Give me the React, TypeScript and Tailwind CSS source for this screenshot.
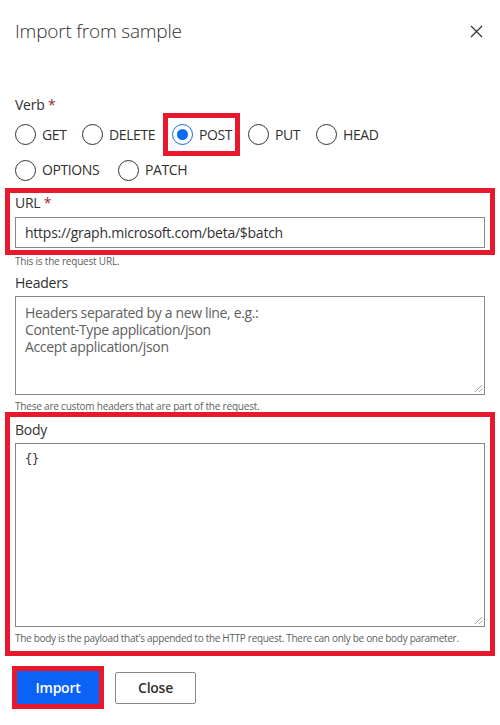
import React from "react";

const RED = "border-[#e8192c]";

function Radio({ label, checked }: { label: string; checked?: boolean }) {
  return (
    <div className="flex items-center">
      <span
        className={`flex h-[21px] w-[21px] items-center justify-center rounded-full border ${
          checked ? "border-[#0b6bf2]" : "border-[#323130]"
        } bg-white`}
      >
        {checked && <span className="h-[11px] w-[11px] rounded-full bg-[#0b6bf2]" />}
      </span>
      <span className="ml-[6px] text-[14px] leading-[20px] tracking-[-0.4px] text-[#323130]">{label}</span>
    </div>
  );
}

function Grip() {
  return (
    <svg className="absolute bottom-[1px] right-[1px]" width="10" height="10" viewBox="0 0 10 10">
      <path d="M9 2 L2 9 M9 6 L6 9" stroke="#a19f9d" strokeWidth="1" fill="none" />
    </svg>
  );
}

export default function App() {
  return (
    <div
      className="relative h-[725px] w-[500px] overflow-hidden bg-white tracking-[-0.25px] text-[#323130]"
      style={{ fontFamily: '"Open Sans", "Noto Sans", sans-serif' }}
    >
      {/* header */}
      <div className="flex items-start justify-between pl-[15px] pr-[17px] pt-[17px]">
        <h1 className="text-[19px] font-light leading-[28px] tracking-[-0.2px] text-[#323130]">
          Import from sample
        </h1>
        <svg className="mt-[8px]" width="13" height="13" viewBox="0 0 13 13">
          <path d="M1 1 L12 12 M12 1 L1 12" stroke="#323130" strokeWidth="1.2" fill="none" />
        </svg>
      </div>

      {/* verb */}
      <div className="mt-[50px] px-[15px] text-[14px] leading-[20px]">
        Verb <span className="text-[#a4262c]">*</span>
      </div>
      <div className="mt-[-2px] flex h-[43px] items-center pl-[15px]">
        <div className="w-[67px]">
          <Radio label="GET" />
        </div>
        <div className="w-[81px]">
          <Radio label="DELETE" />
        </div>
        <div className={`flex h-[43px] w-[77px] items-center border-[5px] ${RED} pl-[4px]`}>
          <Radio label="POST" checked />
        </div>
        <div className="ml-[8px] w-[68px]">
          <Radio label="PUT" />
        </div>
        <div>
          <Radio label="HEAD" />
        </div>
      </div>
      <div className="flex h-[28px] items-center pl-[15px]">
        <div className="w-[103px]">
          <Radio label="OPTIONS" />
        </div>
        <Radio label="PATCH" />
      </div>

      {/* URL */}
      <div className={`mx-[5px] mt-[4px] border-[5px] ${RED} px-[5px] pb-[2px]`}>
        <div className="text-[14px] leading-[20px]">
          URL <span className="text-[#a4262c]">*</span>
        </div>
        <div className="mt-[4px] flex h-[31px] items-center border border-[#8a8886] px-[9px] text-[14px] text-[#323130]">
          https://graph.microsoft.com/beta/$batch
        </div>
      </div>
      <div className="px-[15px] text-[10px] leading-[13px] tracking-[-0.2px] text-[#605e5c]">This is the request URL.</div>

      {/* headers */}
      <div className="mt-[5px] px-[15px] text-[14px] leading-[20px]">Headers</div>
      <div className="mx-[15px] mt-[3px]">
        <div className="relative h-[99px] border border-[#8a8886] px-[9px] pt-[7px] text-[14px] leading-[17px] tracking-[-0.35px] text-[#605e5c]">
          <div>Headers separated by a new line, e.g.:</div>
          <div>Content-Type application/json</div>
          <div>Accept application/json</div>
          <Grip />
        </div>
      </div>
      <div className="mt-[5px] px-[15px] text-[10px] leading-[13px] tracking-[-0.2px] text-[#605e5c]">
        These are custom headers that are part of the request.
      </div>

      {/* body */}
      <div className={`mx-[5px] mt-[-1px] border-[5px] ${RED} px-[5px] pb-[6px]`}>
        <div className="pt-[3px] text-[14px] leading-[20px]">Body</div>
        <div
          className="relative mt-[3px] h-[184px] border border-[#8a8886] px-[9px] pt-[7px] text-[12px] leading-[16px] text-[#323130]"
          style={{ fontFamily: '"DejaVu Sans Mono", monospace' }}
        >
          {"{}"}
          <Grip />
        </div>
        <div className="mt-[5px] whitespace-nowrap text-[10px] leading-[13px] tracking-[-0.3px] text-[#605e5c]">
          The body is the payload that's appended to the HTTP request. There can only be one body parameter.
        </div>
      </div>

      {/* buttons */}
      <div className="mt-[10px] flex items-center pl-[12px]">
        <div className={`border-[5px] ${RED}`}>
          <button className="flex h-[33px] w-[82px] items-center justify-center bg-[#0b62f7] text-[14px] font-semibold text-white">
            Import
          </button>
        </div>
        <button className="ml-[11px] flex h-[32px] w-[81px] items-center justify-center rounded-[2px] border border-[#8a8886] bg-white text-[14px] font-semibold text-[#323130]">
          Close
        </button>
      </div>
    </div>
  );
}
